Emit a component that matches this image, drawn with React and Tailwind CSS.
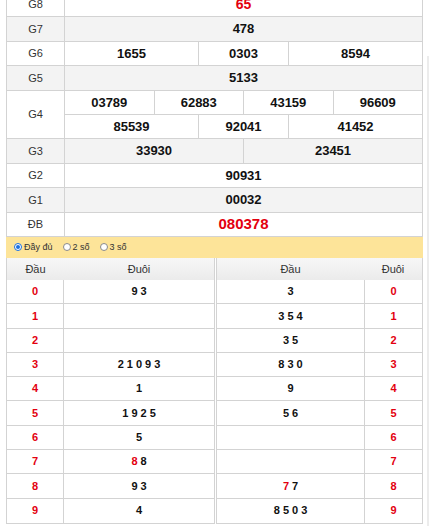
import React from "react";

const RED = "text-[#e3000f]";
const B = "border-[#d3d3d3]";

const Cell = ({ w, last, children, className = "" }) => (
  <div
    className={`${w || "flex-1"} ${last ? "" : `border-r ${B}`} flex items-center justify-center ${className}`}
  >
    {children}
  </div>
);

const Row = ({ label, grey, children }) => (
  <div className={`flex h-[24.4px] border-b ${B} ${grey ? "bg-[#f3f3f3]" : "bg-white"}`}>
    <div className={`w-[58px] shrink-0 border-r ${B} flex items-center justify-center text-[11px] text-[#333]`}>
      {label}
    </div>
    <div className="flex flex-1 text-[13px] font-bold text-[#111]">{children}</div>
  </div>
);

const left = [
  ["0", [["9"], ["3"]]],
  ["1", []],
  ["2", []],
  ["3", [["2"], ["1"], ["0"], ["9"], ["3"]]],
  ["4", [["1"]]],
  ["5", [["1"], ["9"], ["2"], ["5"]]],
  ["6", [["5"]]],
  ["7", [["8", true], ["8"]]],
  ["8", [["9"], ["3"]]],
  ["9", [["4"]]],
];

const right = [
  ["0", [["3"]]],
  ["1", [["3"], ["5"], ["4"]]],
  ["2", [["3"], ["5"]]],
  ["3", [["8"], ["3"], ["0"]]],
  ["4", [["9"]]],
  ["5", [["5"], ["6"]]],
  ["6", []],
  ["7", []],
  ["8", [["7", true], ["7"]]],
  ["9", [["8"], ["5"], ["0"], ["3"]]],
];

const Digits = ({ list }) => (
  <div className="flex gap-[3px]">
    {list.map(([d, red], i) => (
      <span key={i} className={red ? RED : "text-[#111]"}>
        {d}
      </span>
    ))}
  </div>
);

const Radio = ({ checked, label }) => (
  <label className="flex items-center gap-[2px] mr-[10px]">
    <span
      className={`w-[8px] h-[8px] rounded-full border flex items-center justify-center bg-white ${
        checked ? "border-[#1a6fe0]" : "border-[#8a8a8a]"
      }`}
    >
      {checked && <span className="w-[4px] h-[4px] rounded-full bg-[#1a6fe0]" />}
    </span>
    <span className="text-[9px] text-[#333]">{label}</span>
  </label>
);

export default function App() {
  return (
    <div className="flex bg-white h-[530px] overflow-hidden font-['Liberation_Sans',Arial,sans-serif]">
      <div className="ml-[6px] w-[417px] -mt-[7px]">
        <div className={`border-x ${B}`}>
          <Row label="G8">
            <Cell last className={`${RED} text-[14px]`}>65</Cell>
          </Row>
          <Row label="G7" grey>
            <Cell last>478</Cell>
          </Row>
          <Row label="G6">
            <Cell w="w-[134px]">1655</Cell>
            <Cell w="w-[90px]">0303</Cell>
            <Cell last>8594</Cell>
          </Row>
          <Row label="G5" grey>
            <Cell last>5133</Cell>
          </Row>
          <div className={`flex border-b ${B} bg-white`}>
            <div className={`w-[58px] shrink-0 border-r ${B} flex items-center justify-center text-[11px] text-[#333]`}>
              G4
            </div>
            <div className="flex-1 text-[13px] font-bold text-[#111]">
              <div className={`flex h-[24.4px] border-b ${B}`}>
                <Cell>03789</Cell>
                <Cell>62883</Cell>
                <Cell>43159</Cell>
                <Cell last>96609</Cell>
              </div>
              <div className="flex h-[23.4px]">
                <Cell w="w-[134px]">85539</Cell>
                <Cell w="w-[90px]">92041</Cell>
                <Cell last>41452</Cell>
              </div>
            </div>
          </div>
          <Row label="G3" grey>
            <Cell>33930</Cell>
            <Cell last>23451</Cell>
          </Row>
          <Row label="G2">
            <Cell last>90931</Cell>
          </Row>
          <Row label="G1" grey>
            <Cell last>00032</Cell>
          </Row>
          <Row label="ĐB">
            <Cell last className={`${RED} text-[15px]`}>080378</Cell>
          </Row>
        </div>

        <div className="flex items-center h-[21px] bg-[#fde499] pl-[8px]">
          <Radio checked label="Đầy đủ" />
          <Radio label="2 số" />
          <Radio label="3 số" />
        </div>

        <div className="flex gap-[1px]">
          <div className={`w-[209px] border-x border-b ${B}`}>
            <div className="flex h-[22px] bg-gradient-to-b from-[#f7f7f7] to-[#ebebeb] text-[11px] text-[#333]">
              <div className="w-[57px] flex items-center justify-center">Đầu</div>
              <div className="flex-1 flex items-center justify-center">Đuôi</div>
            </div>
            {left.map(([h, tails], i) => (
              <div key={h} className={`flex h-[24.3px] ${i < 9 ? `border-b ${B}` : ""} text-[11px] font-bold bg-white`}>
                <div className={`w-[57px] border-r ${B} flex items-center justify-center ${RED}`}>{h}</div>
                <div className="flex-1 flex items-center justify-center">
                  <Digits list={tails} />
                </div>
              </div>
            ))}
          </div>
          <div className={`w-[207px] border-x border-b ${B}`}>
            <div className="flex h-[22px] bg-gradient-to-b from-[#f7f7f7] to-[#ebebeb] text-[11px] text-[#333]">
              <div className="flex-1 flex items-center justify-center">Đầu</div>
              <div className="w-[58px] flex items-center justify-center">Đuôi</div>
            </div>
            {right.map(([t, heads], i) => (
              <div key={t} className={`flex h-[24.3px] ${i < 9 ? `border-b ${B}` : ""} text-[11px] font-bold bg-white`}>
                <div className="flex-1 flex items-center justify-center">
                  <Digits list={heads} />
                </div>
                <div className={`w-[58px] border-l ${B} flex items-center justify-center ${RED}`}>{t}</div>
              </div>
            ))}
          </div>
        </div>
      </div>
      <div className="ml-[4px] mt-[56px] w-[2px] h-[470px] bg-[#ececec]" />
    </div>
  );
}
